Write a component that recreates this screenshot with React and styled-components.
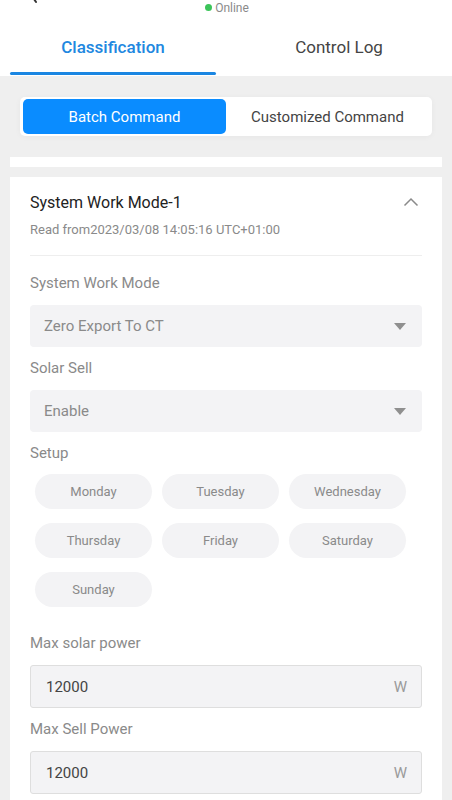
import styled, { createGlobalStyle } from "styled-components";

const GlobalStyle = createGlobalStyle`
    * { box-sizing: border-box; }
    body {
        margin: 0;
        background: #efefef;
        font-family: Roboto, "Noto Sans", "Liberation Sans", sans-serif;
    }
`;

const Page = styled.div`
    width: 452px;
    min-height: 800px;
    background: #efefef;
    overflow: hidden;
`;

const Top = styled.div`
    background: #fff;
    position: relative;
`;

const BackTail = styled.svg`
    position: absolute;
    left: 30px;
    top: -6px;
`;

const Status = styled.div`
    height: 15px;
    display: flex;
    align-items: center;
    justify-content: center;
    gap: 3px;
    font-size: 12px;
    color: #8a8a8a;
    padding-left: 2px;
`;

const Dot = styled.span`
    width: 7px;
    height: 7px;
    border-radius: 50%;
    background: #3cc45a;
`;

const Tabs = styled.div`
    display: flex;
`;

const Tab = styled.div`
    flex: 1;
    height: 61px;
    display: flex;
    align-items: center;
    justify-content: center;
    font-size: 17px;
    font-weight: ${(p) => (p.active ? 500 : 400)};
    color: ${(p) => (p.active ? "#2187e0" : "#444")};
    position: relative;
    padding-top: 2px;
    &::after {
        content: "";
        display: ${(p) => (p.active ? "block" : "none")};
        position: absolute;
        left: 10px;
        right: 10px;
        bottom: 1px;
        height: 3px;
        border-radius: 2px;
        background: #1a86e2;
    }
`;

const Body = styled.div`
    padding: 21px 10px 0;
`;

const Segment = styled.div`
    margin: 0 10px;
    background: #fff;
    border-radius: 5px;
    padding: 2px 3px;
    display: flex;
    box-shadow: 0 1px 6px rgba(0, 0, 0, 0.04);
`;

const SegButton = styled.div`
    flex: 1;
    height: 35px;
    border-radius: 5px;
    display: flex;
    align-items: center;
    justify-content: center;
    font-size: 15px;
    background: ${(p) => (p.active ? "#0a8cff" : "transparent")};
    color: ${(p) => (p.active ? "#fff" : "#444")};
`;

const Strip = styled.div`
    margin-top: 21px;
    height: 10px;
    background: #fff;
`;

const Card = styled.div`
    margin-top: 10px;
    background: #fff;
    padding: 14px 20px 20px;
`;

const TitleRow = styled.div`
    display: flex;
    align-items: center;
    justify-content: space-between;
    height: 22px;
`;

const Title = styled.div`
    font-size: 16px;
    color: #222;
`;

const Sub = styled.div`
    margin-top: 8px;
    font-size: 13px;
    line-height: 17px;
    color: #8a8a8a;
`;

const Divider = styled.div`
    margin-top: 17px;
    height: 1px;
    background: #eeeeee;
`;

const Label = styled.div`
    font-size: 15px;
    line-height: 20px;
    color: #8a8a8a;
    margin-top: ${(p) => p.top}px;
`;

const Select = styled.div`
    margin-top: 12px;
    height: 42px;
    border-radius: 4px;
    background: #f3f3f5;
    display: flex;
    align-items: center;
    justify-content: space-between;
    padding: 0 16px 0 14px;
    font-size: 15px;
    color: #8a8a8a;
`;

const Caret = styled.span`
    width: 0;
    height: 0;
    border-left: 6px solid transparent;
    border-right: 6px solid transparent;
    border-top: 7px solid #8f8f8f;
`;

const Days = styled.div`
    margin-top: 11px;
    padding-left: 5px;
    display: grid;
    grid-template-columns: repeat(3, 117px);
    column-gap: 10px;
    row-gap: 14px;
`;

const Day = styled.div`
    height: 35px;
    border-radius: 18px;
    background: #f3f3f5;
    display: flex;
    align-items: center;
    justify-content: center;
    font-size: 13px;
    color: #8a8a8a;
`;

const Input = styled.div`
    margin-top: 12px;
    height: 43px;
    border-radius: 3px;
    border: 1px solid #dedede;
    background: #f3f3f5;
    display: flex;
    align-items: center;
    justify-content: space-between;
    padding: 0 14px 0 15px;
    font-size: 15px;
    color: #444;
`;

const Unit = styled.span`
    color: #9a9a9a;
`;

const days = ["Monday", "Tuesday", "Wednesday", "Thursday", "Friday", "Saturday", "Sunday"];

export default function App() {
    return (
        <Page>
            <GlobalStyle />
            <Top>
                <BackTail width="14" height="10" viewBox="0 0 14 10">
                    <path d="M2 2 L6 8" stroke="#333" strokeWidth="2" fill="none" strokeLinecap="round" />
                </BackTail>
                <Status>
                    <Dot />
                    Online
                </Status>
                <Tabs>
                    <Tab active>Classification</Tab>
                    <Tab>Control Log</Tab>
                </Tabs>
            </Top>
            <Body>
                <Segment>
                    <SegButton active>Batch Command</SegButton>
                    <SegButton>Customized Command</SegButton>
                </Segment>
                <Strip />
                <Card>
                    <TitleRow>
                        <Title>System Work Mode-1</Title>
                        <svg width="16" height="10" viewBox="0 0 16 10" style={{ marginRight: 3 }}>
                            <path d="M1.5 8.5 L8 2 L14.5 8.5" stroke="#8a8a8a" strokeWidth="1.5" fill="none" />
                        </svg>
                    </TitleRow>
                    <Sub>Read from2023/03/08 14:05:16 UTC+01:00</Sub>
                    <Divider />
                    <Label top={17}>System Work Mode</Label>
                    <Select>
                        Zero Export To CT
                        <Caret />
                    </Select>
                    <Label top={11}>Solar Sell</Label>
                    <Select>
                        Enable
                        <Caret />
                    </Select>
                    <Label top={11}>Setup</Label>
                    <Days>
                        {days.map((d) => (
                            <Day key={d}>{d}</Day>
                        ))}
                    </Days>
                    <Label top={26}>Max solar power</Label>
                    <Input>
                        12000
                        <Unit>W</Unit>
                    </Input>
                    <Label top={11}>Max Sell Power</Label>
                    <Input>
                        12000
                        <Unit>W</Unit>
                    </Input>
                </Card>
            </Body>
        </Page>
    );
}
